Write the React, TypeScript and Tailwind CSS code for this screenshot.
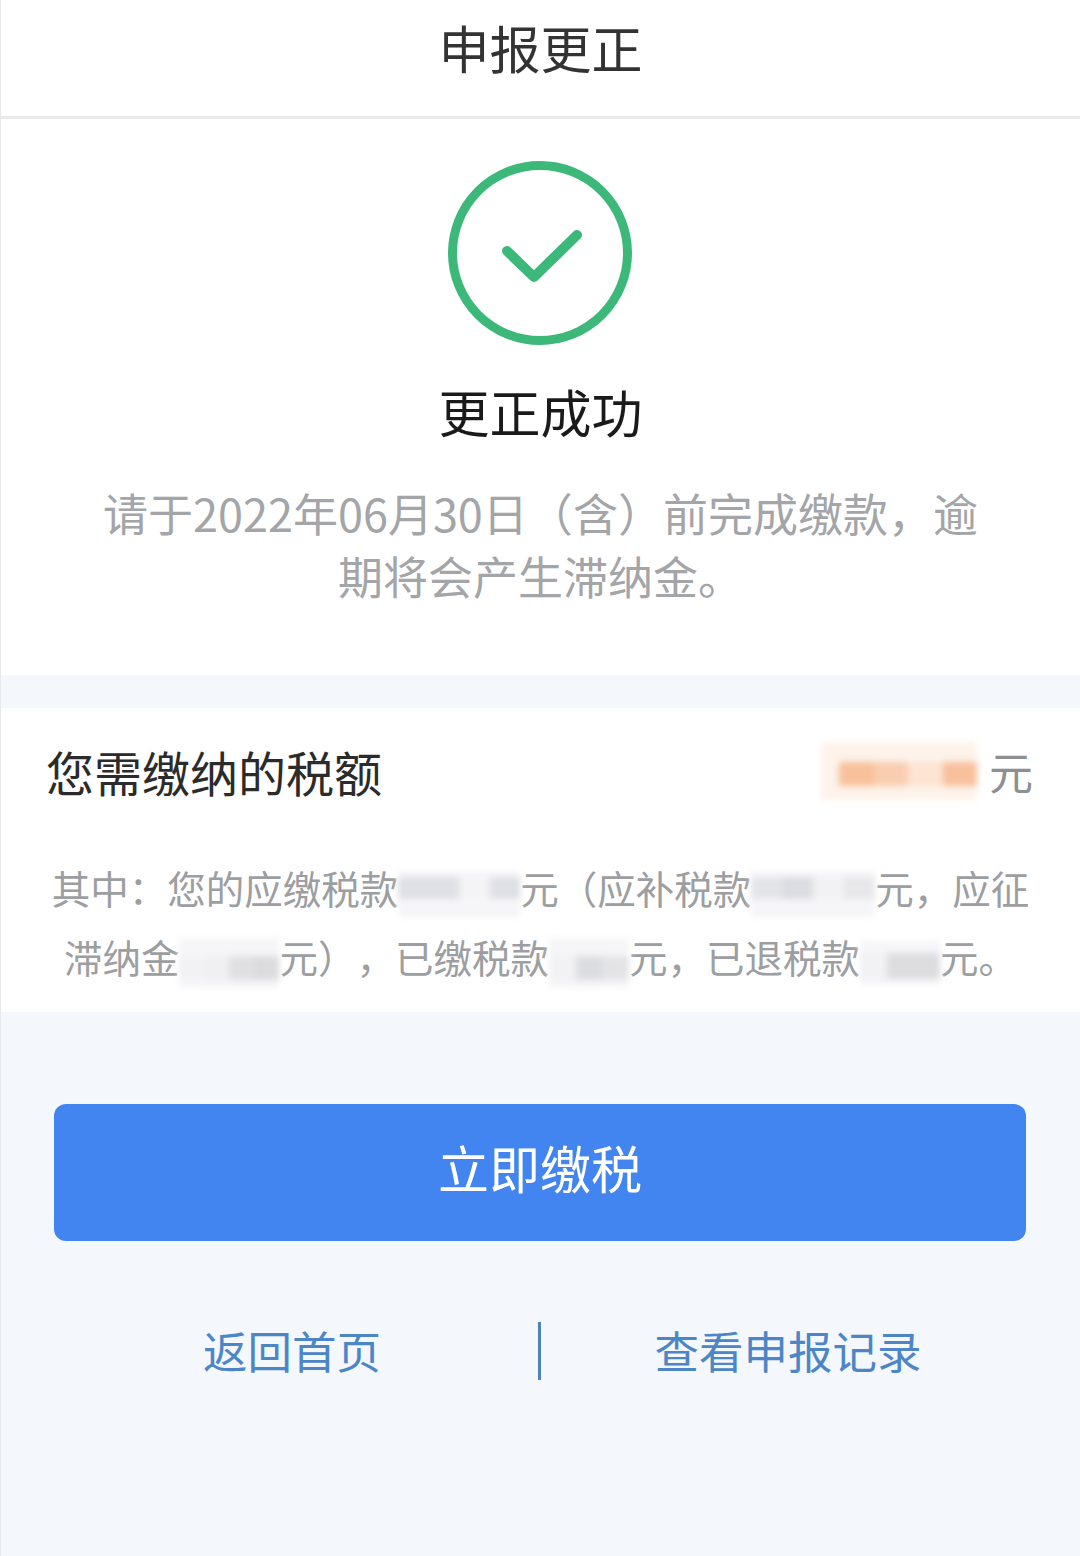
const cjk = "font-['Noto_Sans_CJK_SC','Noto_Sans',sans-serif]";

// full-width punctuation, written as escapes so it can't turn into ascii
const LP = "\uFF08";
const RP = "\uFF09";
const COMMA = "\uFF0C";
const COLON = "\uFF1A";

// mosaic over the redacted amounts: pale box, stronger cells held in by the padding
function Redacted({ className, cells }: { className: string; cells: string[] }) {
  return (
    <span className={`inline-flex align-middle blur-[3px] ${className}`}>
      {cells.map((c, i) => (
        <span key={i} className={`flex-1 ${c}`} />
      ))}
    </span>
  );
}

export default function App() {
  return (
    <div className={`${cjk} flex h-[1556px] w-[1080px] flex-col overflow-hidden border-l border-[#e6e8ec] bg-[#f4f7fb] [text-spacing-trim:space-all]`}>
      <header className="flex h-[119px] shrink-0 items-center justify-center border-b-[3px] border-[#e9eaec] bg-white pb-[22px]">
        <h1 className="text-[51px] leading-none font-normal text-[#333333]">申报更正</h1>
      </header>

      <section className="flex h-[556px] shrink-0 flex-col items-center bg-white pt-[41px]">
        <svg width="186" height="186" viewBox="0 0 186 186" fill="none" className="-ml-px shrink-0">
          <circle cx="93" cy="93" r="87.5" stroke="#3cb878" strokeWidth="9" />
          <path d="M60 91 L87 117 L130 75" stroke="#3cb878" strokeWidth="10" strokeLinecap="round" strokeLinejoin="round" />
        </svg>
        <h2 className="mt-[35px] text-[51px] leading-[60px] font-normal text-[#1a1a1a]">更正成功</h2>
        <p className="mt-[40px] w-[880px] text-center text-[45px] leading-[63px] text-[#a3a5a8]">
          请于2022年06月30日{LP}含{RP}前完成缴款{COMMA}逾期将会产生滞纳金。
        </p>
      </section>

      <section className="mt-[33px] flex h-[304px] shrink-0 flex-col bg-white">
        <div className="flex h-[126px] shrink-0 items-center justify-between pr-[47px] pl-[45px]">
          <span className="text-[48px] leading-none text-[#2b2b2b]">您需缴纳的税额</span>
          <span className="flex items-center gap-[12px] text-[44px] leading-none text-[#8d8f92]">
            <Redacted
              className="h-[58px] w-[156px] bg-[#fdf3ea] pt-[20px] pb-[14px] pl-[18px]"
              cells={["bg-[#f8c09b]", "bg-[#f9cdb0]", "bg-[#fde4d3]", "bg-[#f8c09b]"]}
            />
            元
          </span>
        </div>
        <p className="mt-[19px] text-center text-[38.5px] leading-[69px] whitespace-nowrap text-[#9c9ea1]">
          其中{COLON}您的应缴税款
          <Redacted className="h-[46px] w-[122px] bg-[#f6f6f8] pt-[6px] pb-[18px]" cells={["bg-[#dfe0e5]", "bg-[#dfe0e5]", "bg-[#f4f4f6]", "bg-[#dfe0e5]"]} />
          元{LP}应补税款
          <Redacted className="h-[46px] w-[124px] bg-[#f6f6f8] pt-[6px] pb-[18px]" cells={["bg-[#e4e5e9]", "bg-[#dcdde2]", "bg-[#f2f2f4]", "bg-[#e8e8eb]"]} />
          元{COMMA}应征
          <br />
          滞纳金
          <Redacted className="h-[50px] w-[100px] bg-[#f6f6f8] pt-[18px] pb-[8px]" cells={["bg-[#f2f2f4]", "bg-[#f0f0f2]", "bg-[#e0e0e3]", "bg-[#dcdcdf]"]} />
          元{RP}{COMMA}已缴税款
          <Redacted className="h-[50px] w-[80px] bg-[#f6f6f8] pt-[18px] pb-[8px]" cells={["bg-[#f2f2f4]", "bg-[#dcdde0]", "bg-[#e4e4e7]"]} />
          元{COMMA}已退税款
          <Redacted className="h-[44px] w-[80px] bg-[#f6f6f8] pt-[12px] pb-[6px]" cells={["bg-[#f2f2f4]", "bg-[#dddde0]", "bg-[#dddde0]"]} />
          元。
        </p>
      </section>

      <div className="pt-[92px] pr-[54px] pl-[53px]">
        <button className="flex h-[137px] w-full items-center justify-center rounded-[12px] bg-[#4285f0] pb-[10px] text-[51px] leading-none text-white">
          立即缴税
        </button>
      </div>

      <nav className="mt-[81px] flex h-[58px] items-center">
        <a className="flex w-[537px] shrink-0 justify-center pb-[2px] pl-[45px] text-[44.5px] leading-none text-[#4d86c6]">返回首页</a>
        <span className="h-[58px] w-[3px] shrink-0 bg-[#4d82bf]" />
        <a className="flex flex-1 justify-center pr-[45px] pb-[2px] text-[44.5px] leading-none text-[#4d86c6]">查看申报记录</a>
      </nav>
    </div>
  );
}
